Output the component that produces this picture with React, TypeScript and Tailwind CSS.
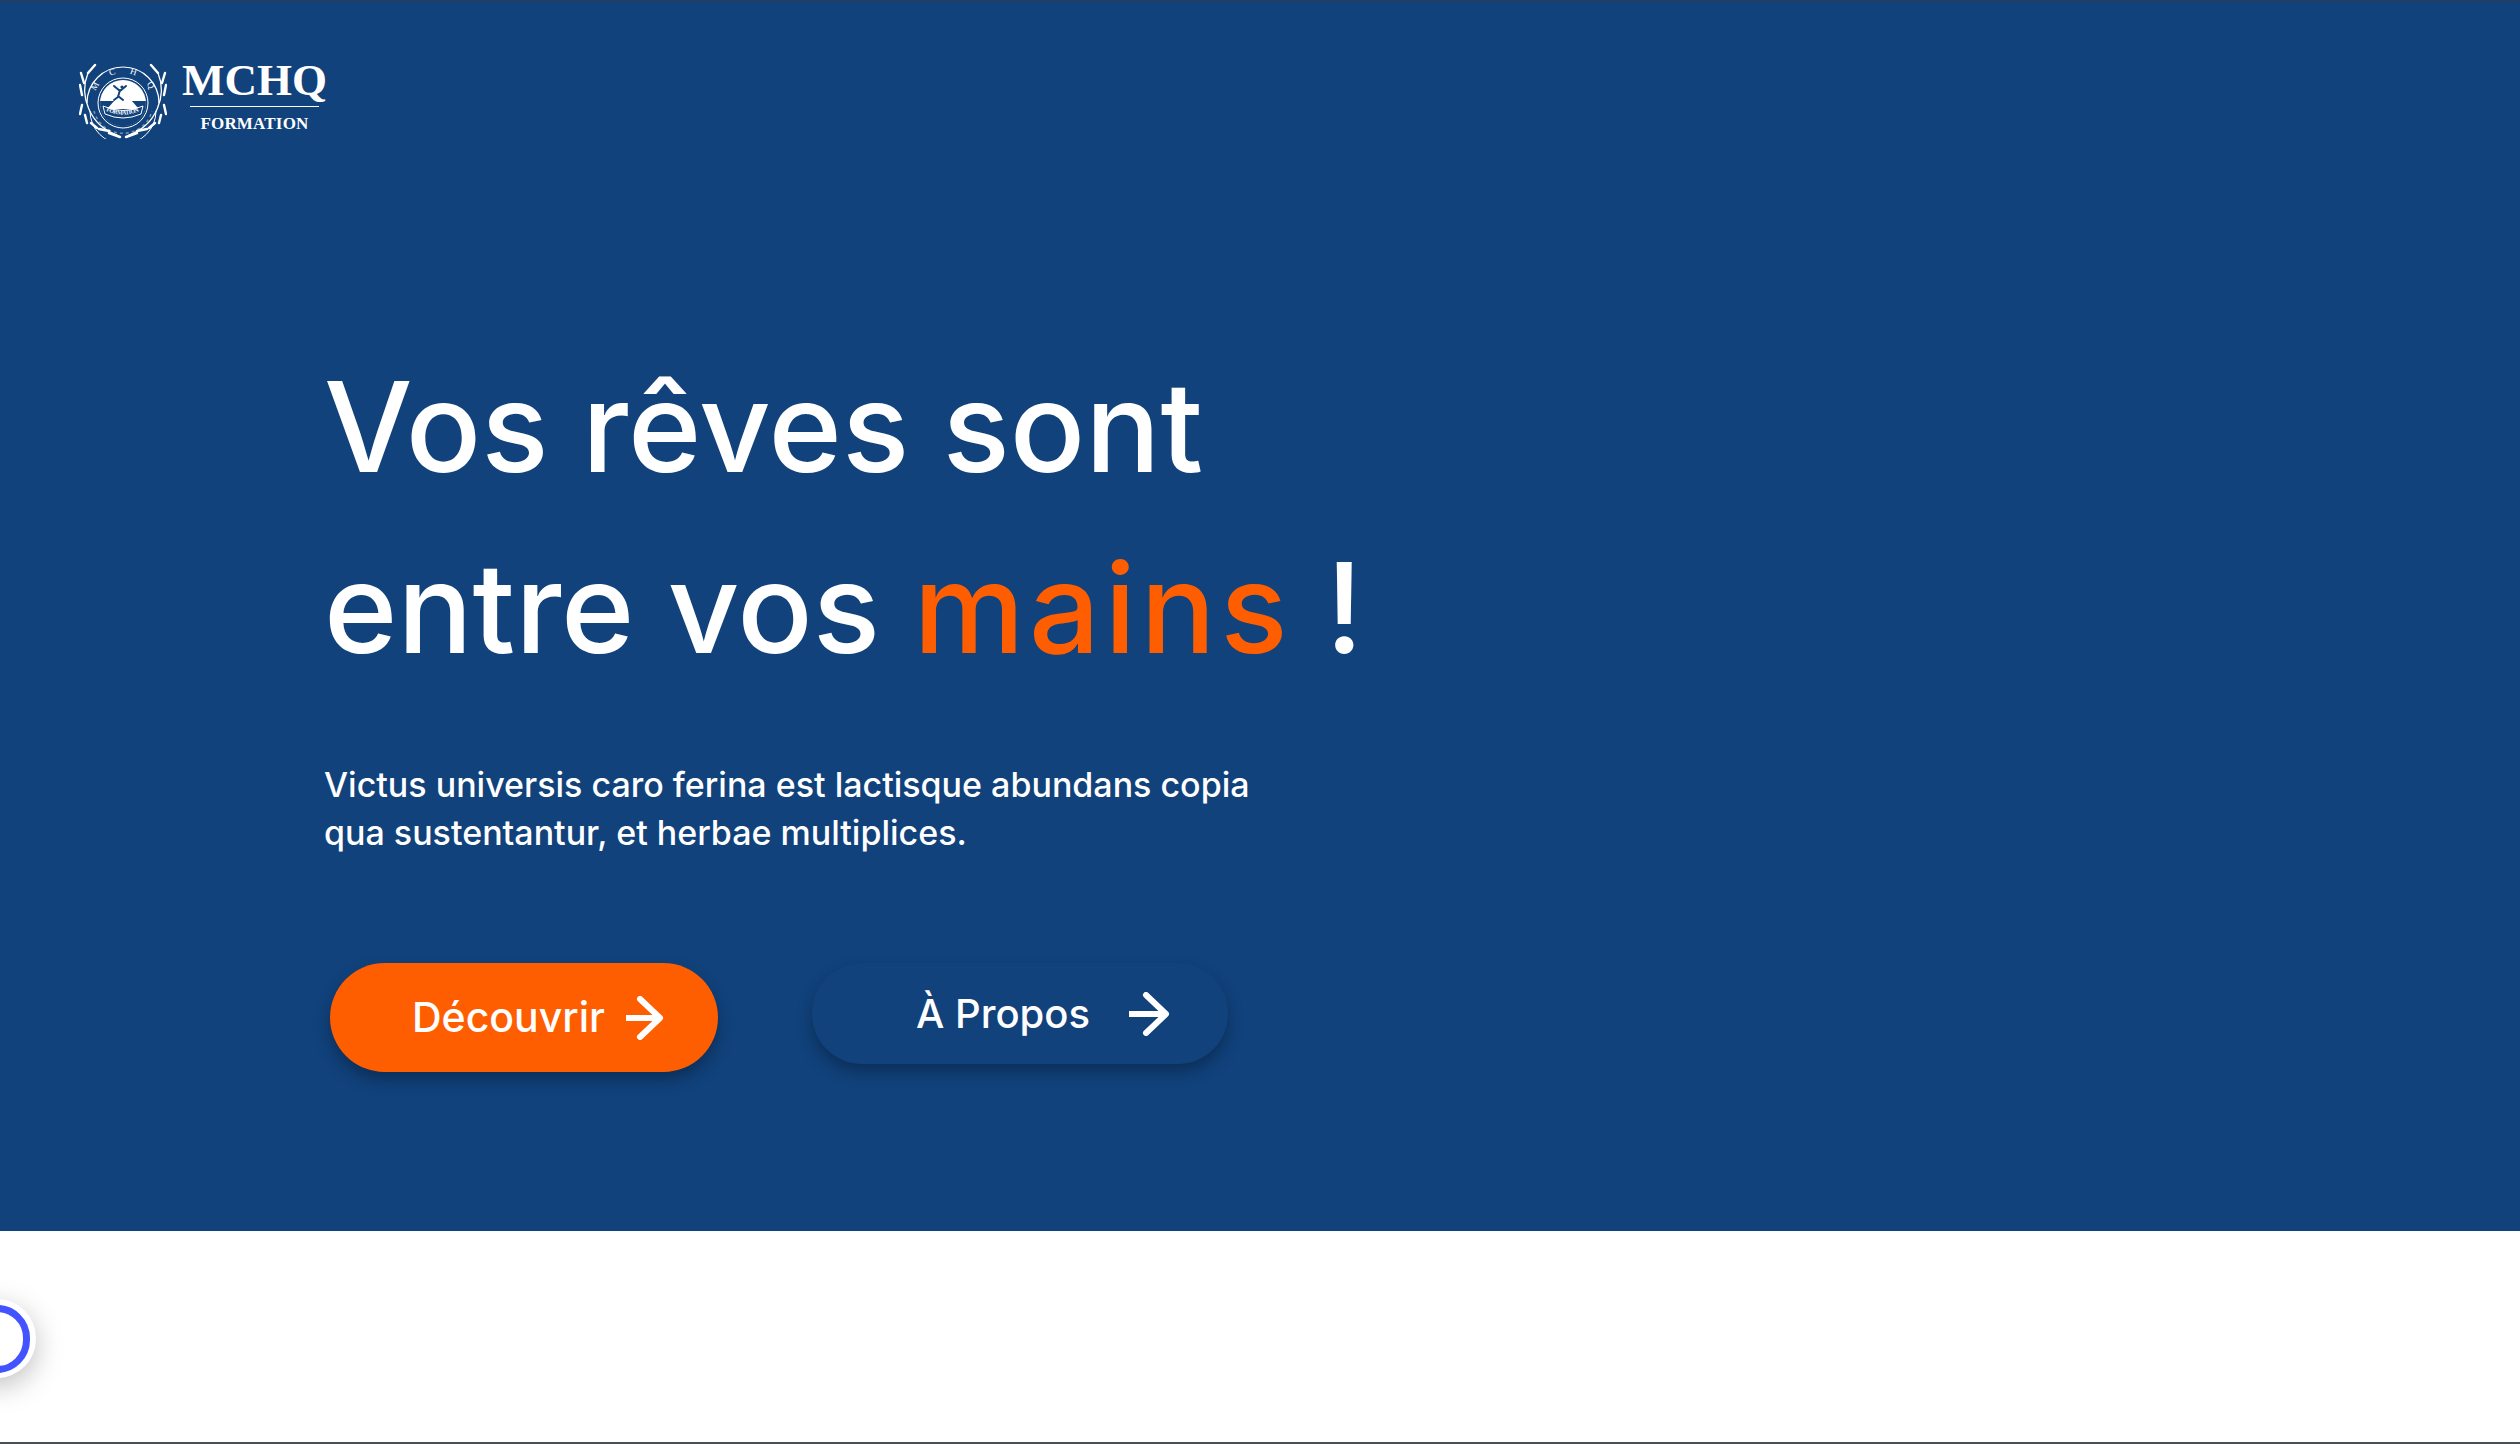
import React from 'react';

const Arrow = ({ wide }: { wide?: boolean }) => (
  <svg width={wide ? 41 : 38} height="44" viewBox={wide ? '0 0 41 44' : '0 0 38 44'} fill="none" stroke="#fff" strokeWidth="6" strokeLinecap="round" strokeLinejoin="round">
    <path d={wide ? 'M0 22h37' : 'M0 22h34'} strokeLinecap="butt" />
    <path d={wide ? 'M17 3l20 19-20 19' : 'M14 3l20 19-20 19'} />
  </svg>
);

const Logo = () => (
  <div className="flex items-start gap-[15px]">
    <svg width="88" height="80" viewBox="0 0 88 80" fill="none" className="mt-[2px]">
      {/* laurel */}
      <g stroke="#fff" strokeLinecap="round">
        <path d="M9 14C0 36 10 66 38 76" strokeWidth="1.3" />
        <path d="M79 14c9 22-1 52-29 62" strokeWidth="1.3" />
        <path d="M9 14l7-8M5 24l-3-10M3 36l-2-10M3 46l-2 9M6 56l2 8M12 64l6 5M20 70l10 2M30 74l11 4" strokeWidth="2.4" />
        <path d="M79 14l-7-8M83 24l3-10M85 36l2-10M85 46l2 9M82 56l-2 8M76 64l-6 5M68 70l-10 2M58 74l-11 4" strokeWidth="2.4" />
      </g>
      <path d="M8 44a36 36 0 0 1 72 0" stroke="#fff" strokeWidth="1.2" />
      <path d="M11 52a33 33 0 0 0 66 0" stroke="#fff" strokeWidth="1" />
      <path d="M15 52a30 30 0 0 0 58 0" stroke="#fff" strokeWidth="1.4" strokeDasharray="3 3" opacity="0.45" />
      <path id="logo-arc" d="M14 44a30 30 0 0 1 60 0" />
      <text fill="#fff" className="font-['Liberation_Serif',serif] text-[9px]">
        <textPath href="#logo-arc" startOffset="13%" textLength="68">M C H Q</textPath>
      </text>
      <circle cx="44" cy="44" r="25" stroke="#fff" strokeWidth="1" />
      <circle cx="44" cy="44" r="23" fill="#fff" />
      <path d="M21.1 42h45.8a23 23 0 1 1-45.8 0z" fill="#11427b" />
      <path d="M28 50l8-9h16l8 9z" fill="#fff" />
      {/* jumping figure */}
      <circle cx="43" cy="28" r="1.6" fill="#11427b" />
      <path d="M35 27l6 5 6-5M41 31l-2 7-4 3M39 37l5 4" stroke="#11427b" strokeWidth="2" strokeLinecap="round" strokeLinejoin="round" />
      {/* banner */}
      <path d="M24 47q20 9 40 0l-2 8q-18 8-36 0z" fill="#11427b" stroke="#fff" strokeWidth="1" />
      <path id="logo-banner" d="M27 52q17 7 34 0" />
      <text fill="#fff" className="font-['Liberation_Serif',serif] text-[6px] font-bold">
        <textPath href="#logo-banner" textLength="34">FORMATION</textPath>
      </text>
    </svg>
    <div className="mt-[4px] flex flex-col items-center font-['Liberation_Serif',serif] text-white">
      <div className="text-[45px] leading-[38px] font-bold">MCHQ</div>
      <div className="mt-[7px] h-[1px] w-[129px] bg-white" />
      <div className="mt-[8px] text-[17px] leading-[18px] font-bold tracking-[0.2px]">FORMATION</div>
    </div>
  </div>
);

export default function App() {
  return (
    <div className="flex h-[1444px] w-[2520px] flex-col overflow-hidden bg-white font-['Inter',sans-serif]">
      <section className="h-[1231px] shrink-0 border-t border-[#2f3a4a] bg-[#11427b] pt-[56px] text-white">
        <div className="pl-[79px]">
          <Logo />
        </div>

        <div className="mt-[197px] pl-[324px]">
          <h1 className="text-[125px] leading-[181px] font-medium">
            Vos rêves sont
            <br />
            entre vos <span className="tracking-[4.5px] text-[#ff5e00]">mains</span> !
          </h1>
          <p className="mt-[63px] text-[34px] leading-[48px] font-medium">
            Victus universis caro ferina est lactisque abundans copia
            <br />
            qua sustentantur, et herbae multiplices.
          </p>

          <div className="mt-[106px] flex items-start pl-[6px]">
            <button className="flex h-[109px] w-[388px] items-center gap-[21px] rounded-[55px] bg-[#ff5e00] pl-[82px] text-[41px] font-medium shadow-[0_8px_14px_rgba(8,30,60,0.5)]">
              Découvrir
              <Arrow />
            </button>
            <button className="ml-[94px] flex h-[101px] w-[416px] items-center gap-[39px] rounded-[50px] bg-[#11427b] pl-[104px] text-[40px] font-medium shadow-[0_8px_14px_rgba(8,30,60,0.5)]">
              À Propos
              <Arrow wide />
            </button>
          </div>
        </div>
      </section>

      <div className="relative flex-1">
        <div className="absolute top-[68px] left-[-42px] flex h-[79px] w-[78px] items-center justify-center rounded-full bg-white shadow-[0_8px_28px_rgba(0,0,0,0.25)]">
          <div className="h-[68px] w-[66px] rounded-full border-[7px] border-[#4353ff] bg-white" />
        </div>
        <div className="absolute right-0 bottom-0 left-0 h-[2px] bg-[#4a4f57]" />
      </div>
    </div>
  );
}
